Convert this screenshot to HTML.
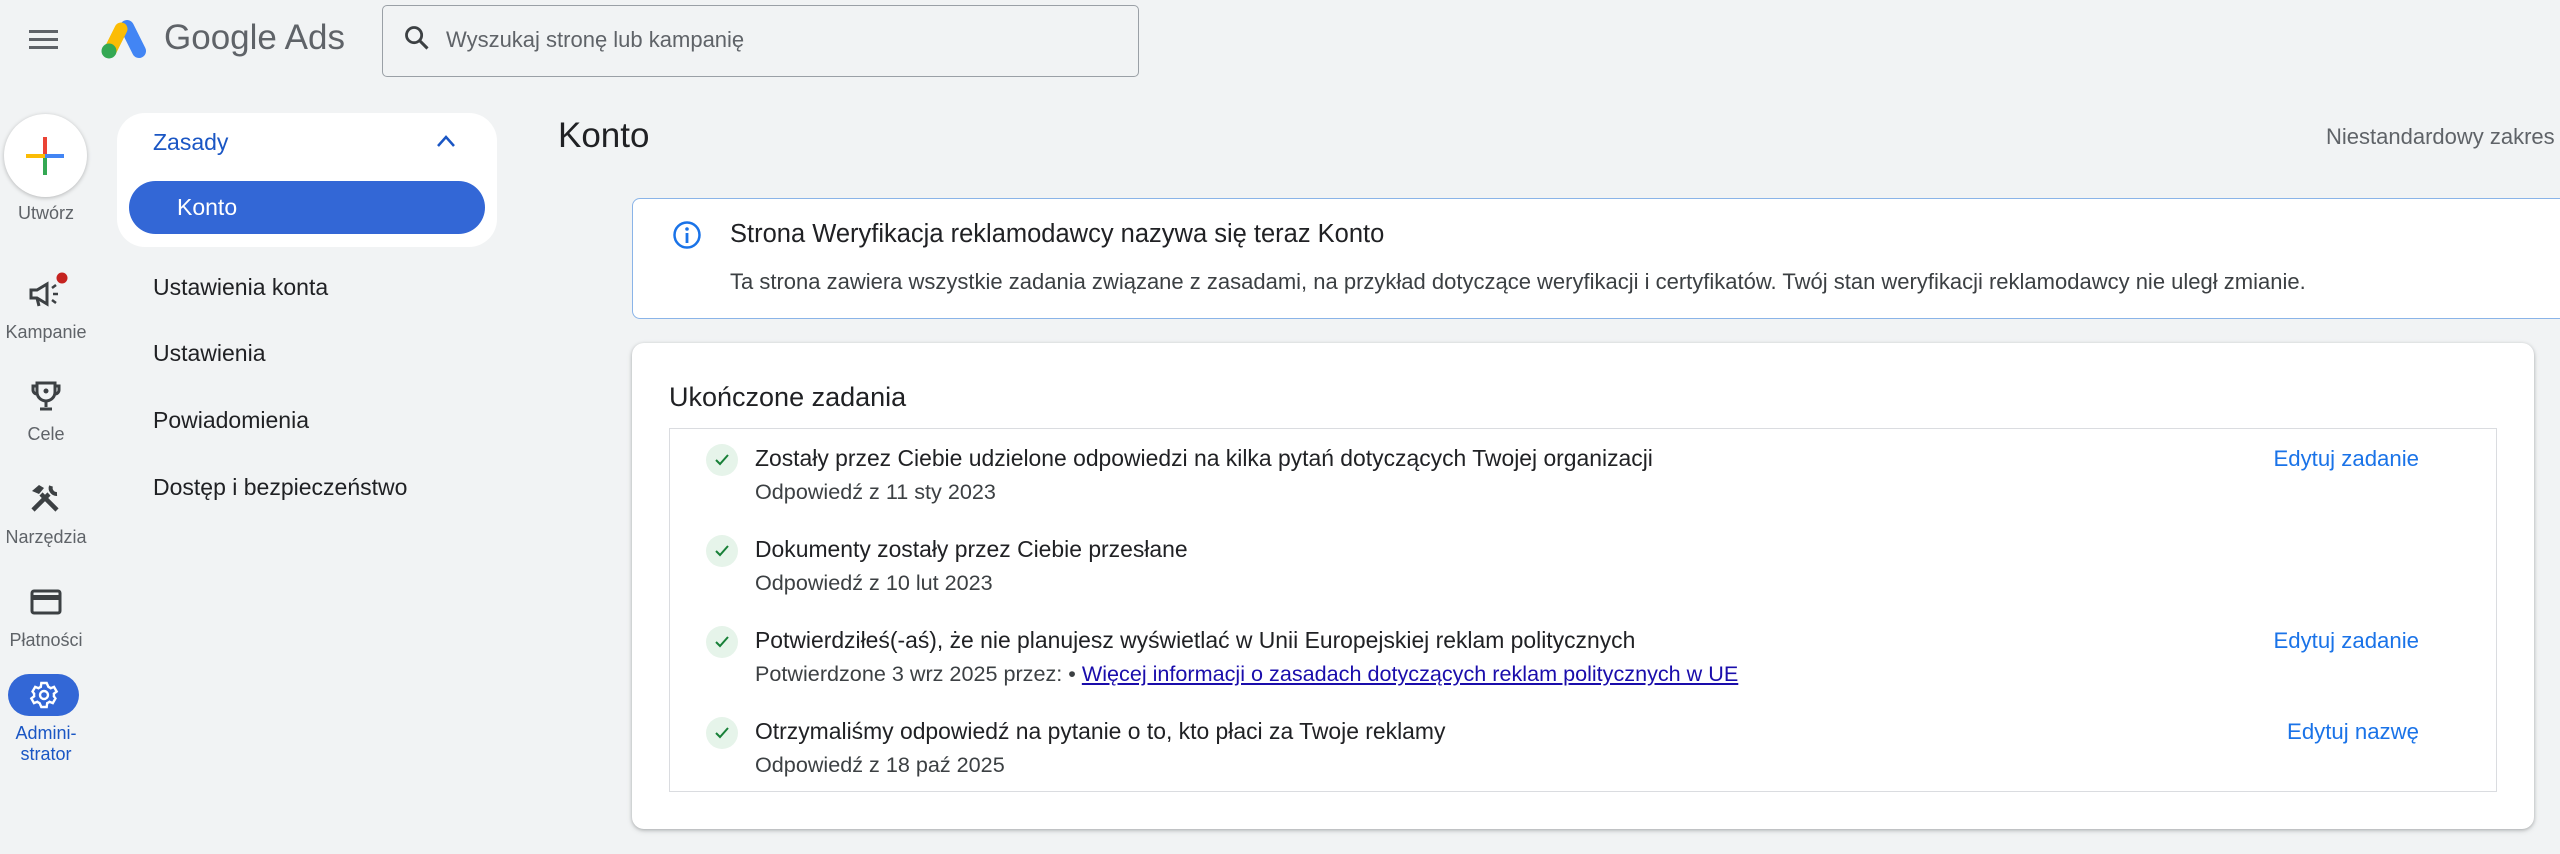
<!DOCTYPE html>
<html><head><meta charset="utf-8"><style>
*{box-sizing:border-box;margin:0;padding:0}
body{width:2560px;height:854px;overflow:hidden;background:#f1f3f4;font-family:"Liberation Sans",sans-serif;color:#202124;position:relative}
.a{position:absolute;white-space:nowrap}
.lbl{position:absolute;width:92px;left:0;text-align:center;font-size:18px;color:#5f6368}
.nav{position:absolute;left:153px;font-size:23px;color:#202124}
.row{position:absolute;left:755px;font-size:22.9px;color:#202124}
.sub{position:absolute;left:755px;font-size:21.6px;color:#3c4043}
.chk{position:absolute;left:706px;width:32px;height:32px;border-radius:50%;background:#e6f4ea}
.ed{position:absolute;right:141px;font-size:22.2px;color:#1a73e8}
</style></head><body>
<svg class="a" style="left:29px;top:30px" width="29" height="20"><rect y="0" width="29" height="3" fill="#5f6368"/><rect y="8" width="29" height="3" fill="#5f6368"/><rect y="16" width="29" height="3" fill="#5f6368"/></svg>
<svg class="a" style="left:99px;top:19px" width="48" height="42" viewBox="0 0 48 42"><line x1="28" y1="8" x2="40" y2="32" stroke="#4285f4" stroke-width="14" stroke-linecap="round"/><line x1="22" y1="10" x2="11" y2="32" stroke="#fbbc04" stroke-width="13" stroke-linecap="round"/><circle cx="10" cy="32" r="7.5" fill="#34a853"/></svg>
<div class="a" style="left:164px;top:18px;font-size:35px;color:#5f6368">Google Ads</div>
<div class="a" style="left:382px;top:5px;width:757px;height:72px;border:1.5px solid #9aa0a6;border-radius:5px"></div>
<svg class="a" style="left:403px;top:24px" width="28" height="28" viewBox="0 0 24 24"><circle cx="9.5" cy="9.5" r="6.5" fill="none" stroke="#3c4043" stroke-width="2.4"/><line x1="14" y1="14" x2="21" y2="21" stroke="#3c4043" stroke-width="2.6"/></svg>
<div class="a" style="left:446px;top:27px;font-size:22px;color:#5f6368">Wyszukaj stronę lub kampanię</div>
<div class="a" style="left:4px;top:114px;width:83px;height:83px;border-radius:50%;background:#fff;box-shadow:0 1px 4px rgba(0,0,0,.25)"></div>
<svg class="a" style="left:26px;top:137px" width="38" height="38" viewBox="0 0 38 38"><rect x="17" y="0" width="4" height="19" fill="#ea4335"/><rect x="17" y="19" width="4" height="19" fill="#34a853"/><rect x="0" y="17" width="19" height="4" fill="#fbbc04"/><rect x="19" y="17" width="19" height="4" fill="#4285f4"/></svg>
<div class="lbl" style="top:203px">Utwórz</div>
<svg class="a" style="left:28px;top:272px" width="40" height="40" viewBox="0 0 40 40"><path d="M3 18h6l10-6v20l-10-6H3z" fill="none" stroke="#3c4043" stroke-width="3"/><path d="M9 26l2 8" stroke="#3c4043" stroke-width="3"/><path d="M24 16l4-3M25 22h5M24 28l4 3" stroke="#3c4043" stroke-width="2.5"/><circle cx="34" cy="6" r="5.5" fill="#c5221f"/></svg>
<div class="lbl" style="top:322px">Kampanie</div>
<svg class="a" style="left:31px;top:380px" width="30" height="32" viewBox="0 0 30 32"><path d="M6 3h18v9a9 9 0 0 1-18 0z M6 6H2v4a4 4 0 0 0 4 4 M24 6h4v4a4 4 0 0 1-4 4 M15 21v6 M9 29h12" fill="none" stroke="#3c4043" stroke-width="3"/><circle cx="15" cy="11" r="2.5" fill="#3c4043"/></svg>
<div class="lbl" style="top:424px">Cele</div>
<svg class="a" style="left:29px;top:482px" width="32" height="32" viewBox="0 0 32 32"><path d="M4 28L20 12M12 12l16 16" stroke="#3c4043" stroke-width="4.5"/><path d="M3 9l7-6 5 3-5 6z" fill="#3c4043"/><path d="M22 4a6 6 0 0 0 6 8" stroke="#3c4043" stroke-width="4" fill="none"/></svg>
<div class="lbl" style="top:527px">Narzędzia</div>
<svg class="a" style="left:30px;top:589px" width="32" height="26" viewBox="0 0 32 26"><rect x="2" y="2" width="28" height="22" rx="2" fill="none" stroke="#3c4043" stroke-width="3"/><rect x="2" y="6" width="28" height="5" fill="#3c4043"/></svg>
<div class="lbl" style="top:630px">Płatności</div>
<div class="a" style="left:8px;top:674px;width:71px;height:42px;border-radius:21px;background:#3367d6"></div>
<svg class="a" style="left:28px;top:679px" width="32" height="32" viewBox="0 0 24 24"><path fill="none" stroke="#fff" stroke-width="1.8" d="M19.4 13a7.5 7.5 0 0 0 0-2l2.1-1.6-2-3.5-2.5 1a7 7 0 0 0-1.7-1L14 3h-4l-.4 2.9a7 7 0 0 0-1.7 1l-2.5-1-2 3.5L4.6 11a7.5 7.5 0 0 0 0 2l-2.1 1.6 2 3.5 2.5-1a7 7 0 0 0 1.7 1L10 21h4l.4-2.9a7 7 0 0 0 1.7-1l2.5 1 2-3.5z"/><circle cx="12" cy="12" r="3" fill="none" stroke="#fff" stroke-width="1.8"/></svg>
<div class="lbl" style="top:723px;color:#1a56c4;line-height:21px">Admini-<br>strator</div>
<div class="a" style="left:117px;top:113px;width:380px;height:134px;background:#fff;border-radius:28px"></div>
<div class="a" style="left:153px;top:129px;font-size:23px;color:#1a56c4">Zasady</div>
<svg class="a" style="left:436px;top:134px" width="20" height="14"><path d="M2 12L10 3l8 9" fill="none" stroke="#1a56c4" stroke-width="2.5"/></svg>
<div class="a" style="left:129px;top:181px;width:356px;height:53px;border-radius:27px;background:#3367d6"></div>
<div class="a" style="left:177px;top:194px;font-size:23px;color:#fff">Konto</div>
<div class="nav" style="top:274px">Ustawienia konta</div>
<div class="nav" style="top:340px">Ustawienia</div>
<div class="nav" style="top:407px">Powiadomienia</div>
<div class="nav" style="top:474px">Dostęp i bezpieczeństwo</div>
<div class="a" style="left:558px;top:116px;font-size:35px;color:#202124">Konto</div>
<div class="a" style="left:2326px;top:124px;font-size:22px;color:#5f6368">Niestandardowy zakres</div>
<div class="a" style="left:632px;top:198px;width:1960px;height:121px;background:#fff;border:1.5px solid #8ab4e8;border-radius:8px"></div>
<svg class="a" style="left:672px;top:220px" width="30" height="30" viewBox="0 0 30 30"><circle cx="15" cy="15" r="12.5" fill="none" stroke="#1a73e8" stroke-width="2.5"/><rect x="13.6" y="13" width="2.8" height="10" fill="#1a73e8"/><circle cx="15" cy="9" r="1.8" fill="#1a73e8"/></svg>
<div class="a" style="left:730px;top:220px;font-size:25.5px;color:#202124">Strona Weryfikacja reklamodawcy nazywa się teraz Konto</div>
<div class="a" style="left:730px;top:269px;font-size:22px;color:#3c4043">Ta strona zawiera wszystkie zadania związane z zasadami, na przykład dotyczące weryfikacji i certyfikatów. Twój stan weryfikacji reklamodawcy nie uległ zmianie.</div>
<div class="a" style="left:632px;top:343px;width:1902px;height:486px;background:#fff;border-radius:12px;box-shadow:0 1px 3px rgba(60,64,67,.3),0 2px 6px rgba(60,64,67,.15)"></div>
<div class="a" style="left:669px;top:382px;font-size:27px;color:#202124">Ukończone zadania</div>
<div class="a" style="left:669px;top:428px;width:1828px;height:364px;border:1px solid #dadce0"></div>
<div class="chk" style="top:444px"></div><div class="chk" style="top:535px"></div><div class="chk" style="top:626px"></div><div class="chk" style="top:717px"></div>
<svg class="a" style="left:714px;top:452px" width="16" height="16"><path d="M2 8l4 4 8-9" fill="none" stroke="#188038" stroke-width="2"/></svg>
<svg class="a" style="left:714px;top:543px" width="16" height="16"><path d="M2 8l4 4 8-9" fill="none" stroke="#188038" stroke-width="2"/></svg>
<svg class="a" style="left:714px;top:634px" width="16" height="16"><path d="M2 8l4 4 8-9" fill="none" stroke="#188038" stroke-width="2"/></svg>
<svg class="a" style="left:714px;top:725px" width="16" height="16"><path d="M2 8l4 4 8-9" fill="none" stroke="#188038" stroke-width="2"/></svg>
<div class="row" style="top:445px">Zostały przez Ciebie udzielone odpowiedzi na kilka pytań dotyczących Twojej organizacji</div>
<div class="sub" style="top:479px">Odpowiedź z 11 sty 2023</div>
<div class="row" style="top:536px">Dokumenty zostały przez Ciebie przesłane</div>
<div class="sub" style="top:570px">Odpowiedź z 10 lut 2023</div>
<div class="row" style="top:627px">Potwierdziłeś(-aś), że nie planujesz wyświetlać w Unii Europejskiej reklam politycznych</div>
<div class="sub" style="top:661px">Potwierdzone 3 wrz 2025 przez: • <span style="color:#1a0dab;text-decoration:underline">Więcej informacji o zasadach dotyczących reklam politycznych w UE</span></div>
<div class="row" style="top:718px">Otrzymaliśmy odpowiedź na pytanie o to, kto płaci za Twoje reklamy</div>
<div class="sub" style="top:752px">Odpowiedź z 18 paź 2025</div>
<div class="ed" style="top:446px">Edytuj zadanie</div>
<div class="ed" style="top:628px">Edytuj zadanie</div>
<div class="ed" style="top:719px">Edytuj nazwę</div>
</body></html>
